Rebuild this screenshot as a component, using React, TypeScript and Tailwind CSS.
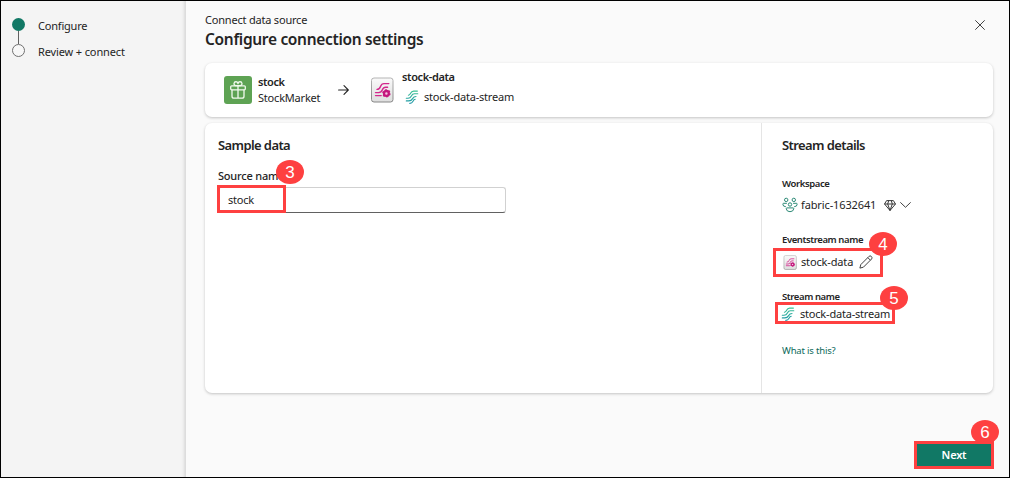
import React from "react";

function StreamIcon({ className }: { className: string }) {
  return (
    <svg className={className} viewBox="0 0 14 14" fill="none" strokeWidth="1.1" strokeLinecap="round">
      <defs>
        <linearGradient id="streamTone" gradientUnits="userSpaceOnUse" x1="0" y1="0" x2="0" y2="14">
          <stop offset="0" stopColor="#3cc492" />
          <stop offset="1" stopColor="#1b93a8" />
        </linearGradient>
      </defs>
      <g stroke="url(#streamTone)">
        <path d="M3.400 5.200C6.400 5 4.800 1.200 8.600 1.100H12.400" />
        <path d="M1.300 8.300H3C7.400 8.300 5.400 3.800 9.400 3.800H12.800" />
        <path d="M1.300 10.900H3.800C8.800 10.900 6.400 6.500 11 6.500" />
        <path d="M4.800 13.400C8.600 13.200 7.400 9.600 10.200 9.300" />
      </g>
    </svg>
  );
}

function EventstreamIcon({ className }: { className: string }) {
  return (
    <svg className={className} viewBox="0 0 24 26" fill="none">
      <defs>
        <linearGradient id="tileFace" x1="0" y1="0" x2="0" y2="1">
          <stop offset="0" stopColor="#fafafa" />
          <stop offset="1" stopColor="#dedede" />
        </linearGradient>
        <linearGradient id="tileEdge" x1="0" y1="0" x2="0" y2="1">
          <stop offset="0" stopColor="#b4b4b4" />
          <stop offset="1" stopColor="#858585" />
        </linearGradient>
      </defs>
      <rect x="1.500" y="1" width="21.500" height="24" rx="2.500" fill="url(#tileFace)" stroke="url(#tileEdge)" />
      <g stroke="#d3278c" strokeWidth="1.400" strokeLinecap="round">
        <path d="M7 12.400C12 12.400 9 6.600 14 6.600H18.800" />
        <path d="M5.500 15.600H8.600C13.800 15.600 11 10.200 15.600 10.200H17.600" />
        <path d="M5.500 18.600H11.200" />
      </g>
      <circle cx="16.400" cy="16.400" r="2.400" stroke="#c4177d" strokeWidth="2.300" fill="#f5c4e0" />
      <circle cx="16.400" cy="16.400" r="3.500" stroke="#c4177d" strokeWidth="1.400" strokeDasharray="1.830 1.830" />
    </svg>
  );
}

function GiftIcon() {
  return (
    <svg className="h-[18px] w-[16px]" viewBox="0 0 16 18" fill="none" stroke="#f2faee" strokeWidth="1.300" strokeLinejoin="round">
      <rect x=".7" y="4.800" width="14.600" height="4" rx="1" />
      <path d="M2 8.800V15.200C2 16.400 2.800 17.200 4 17.200H12C13.200 17.200 14 16.400 14 15.200V8.800M8 4.800V17.200" />
      <path d="M8 4.700H5.600A2 2 0 1 1 8 2.700A2 2 0 1 1 10.400 4.700Z" />
    </svg>
  );
}

function PeopleIcon() {
  return (
    <svg className="h-[16px] w-[16px] shrink-0" viewBox="0 0 16 16" fill="none" stroke="#2c8a76" strokeWidth="1">
      <circle cx="4.200" cy="2.900" r="1.700" />
      <circle cx="11.800" cy="2.900" r="1.700" />
      <circle cx="8" cy="7.500" r="1.700" />
      <path d="M4.900 6.300H1.600Q.8 6.300 .8 7.100Q.9 9.700 3.800 9.700M11.100 6.300H14.400Q15.200 6.300 15.200 7.100Q15.100 9.700 12.200 9.700" />
      <path d="M4.900 10.900H11.100Q11.900 10.900 11.800 11.800Q11.300 14.700 8 14.700Q4.700 14.700 4.200 11.800Q4.100 10.900 4.900 10.900Z" />
    </svg>
  );
}

function DiamondIcon() {
  return (
    <svg className="h-[11px] w-[12px] shrink-0" viewBox="0 0 12 11" fill="none" stroke="#303030" strokeWidth=".95" strokeLinejoin="round">
      <path d="M2.600 .6H9.400L11.500 4L6 10.500L.5 4ZM.5 4H11.500M4.700 .6L3.700 4L6 10.500L8.300 4L7.300 .6" />
    </svg>
  );
}

function Badge({ n, className }: { n: number; className: string }) {
  return (
    <span
      className={`absolute z-10 flex h-[24px] w-[28px] items-center justify-center rounded-[50%] bg-[#fe4040] font-['Liberation_Sans',sans-serif] text-[17px] leading-none tracking-normal text-white ${className}`}
    >
      {n}
    </span>
  );
}

function Frame({ className }: { className: string }) {
  return <span className={`pointer-events-none absolute border-[3px] border-[#fe4040] ${className}`} />;
}

export default function App() {
  return (
    <div className="flex h-[478px] w-[1010px] overflow-hidden border border-black bg-[#fafafa] font-['Noto_Sans',sans-serif] text-[11px] tracking-[-0.2px] text-[#242424]">
      <aside className="flex w-[185px] shrink-0 gap-[13px] bg-[#f4f4f4] pt-[17px] pl-[11px] shadow-[inset_-4px_0_3px_-2px_#d9d9d9]">
        <div className="flex w-[13px] flex-col items-center">
          <span className="h-[13px] w-[13px] shrink-0 rounded-full bg-[#117865]" />
          <span className="h-[13px] w-px shrink-0 bg-[#616161]" />
          <span className="h-[13px] w-[13px] shrink-0 rounded-full border border-[#707070] bg-[#f7f7f7]" />
        </div>
        <div className="flex flex-col whitespace-nowrap">
          <span className="h-[26px] leading-[15px]">Configure</span>
          <span className="leading-[15px] tracking-[-0.13px]">Review + connect</span>
        </div>
      </aside>

      <main className="flex min-w-0 flex-1 flex-col pr-[16px] pl-[19px]">
        <header className="flex h-[62px] shrink-0 justify-between pt-[10px]">
          <div>
            <div className="h-[17px] leading-[17px]">Connect data source</div>
            <h1 className="text-[15.5px] leading-[23px] font-semibold tracking-[-0.32px]">Configure connection settings</h1>
          </div>
          <svg className="mt-[9px] mr-[8px] h-[10px] w-[10px]" viewBox="0 0 10 10" stroke="#424242" strokeWidth="1">
            <path d="M.3 .3L9.700 9.700M9.700 .3L.3 9.700" />
          </svg>
        </header>

        <section className="flex h-[54px] shrink-0 items-center rounded-[7px] bg-white pl-[19px] whitespace-nowrap shadow-[0_1px_3px_rgba(0,0,0,0.22)]">
          <div className="flex h-[28px] w-[28px] items-center justify-center rounded-[3px] bg-[#5ea354]">
            <GiftIcon />
          </div>
          <div className="ml-[6px] w-[80px] leading-[16px]">
            <div className="font-semibold tracking-[-0.4px]">stock</div>
            <div>StockMarket</div>
          </div>
          <svg className="h-[10px] w-[11px]" viewBox="0 0 11 10" fill="none" stroke="#242424" strokeWidth="1.100" strokeLinecap="round" strokeLinejoin="round">
            <path d="M.6 5H10.200M6 .7L10.300 5L6 9.300" />
          </svg>
          <EventstreamIcon className="ml-[21px] h-[26px] w-[24px]" />
          <div className="ml-[8px] pb-[7px]">
            <div className="h-[20px] leading-[18px] font-semibold tracking-[-0.38px]">stock-data</div>
            <div className="flex h-[18px] items-center pl-[3px] leading-[18px]">
              <StreamIcon className="h-[14px] w-[14px]" />
              <span className="ml-[5px]">stock-data-stream</span>
            </div>
          </div>
        </section>

        <section className="mt-[6px] flex h-[270px] shrink-0 rounded-[7px] bg-white whitespace-nowrap shadow-[0_1px_3px_rgba(0,0,0,0.22)]">
          <div className="w-[556px] pt-[13px] pl-[13px]">
            <h2 className="text-[13px] leading-[18px] font-semibold tracking-[-0.6px]">Sample data</h2>
            <div className="relative mt-[14px] w-[288px]">
              <label className="block h-[19px] text-[11px] leading-[15px] font-medium">Source name</label>
              <div className="flex h-[26px] items-center rounded-[3px] border border-[#d1d1d1] border-b-[#616161] pl-[9px]">stock</div>
              <Frame className="top-[17px] left-[-1px] h-[28px] w-[69px]" />
              <Badge n={3} className="top-[-8px] left-[58px]" />
            </div>
          </div>
          <div className="flex-1 border-l border-[#e5e5e5] pt-[13px] pl-[20px]">
            <h2 className="text-[13px] leading-[18px] font-semibold tracking-[-0.6px]">Stream details</h2>
            <div className="mt-[23px] text-[9.5px] leading-[14px] font-semibold tracking-[-0.38px]">Workspace</div>
            <div className="mt-[5px] flex h-[18px] items-center">
              <PeopleIcon />
              <span className="ml-[3px] w-[83px] tracking-[-0.12px]">fabric-1632641</span>
              <DiamondIcon />
              <svg className="ml-[4px] h-[6px] w-[11px]" viewBox="0 0 11 6" fill="none" stroke="#424242" strokeWidth="1" strokeLinecap="round" strokeLinejoin="round">
                <path d="M.6 .6L5.500 5.300L10.400 .6" />
              </svg>
            </div>
            <div className="relative mt-[19px]">
              <div className="text-[9.5px] leading-[14px] font-semibold tracking-[-0.4px]">Eventstream name</div>
              <div className="mt-[6px] flex h-[18px] items-center">
                <EventstreamIcon className="ml-[1px] h-[15px] w-[14px]" />
                <span className="ml-[4px] w-[58px] tracking-[-0.15px]">stock-data</span>
                <svg className="h-[14px] w-[14px]" viewBox="0 0 14 14" fill="none" stroke="#424242" strokeWidth="1" strokeLinejoin="round">
                  <path d="M.9 13.100L1.800 9.600L10.100 1.300Q11.100 .4 12.200 1.300Q13.600 2.700 12.700 3.900L4.400 12.200ZM8.800 2.600L11.400 5.200" />
                </svg>
              </div>
              <Frame className="top-[15px] left-[-9px] h-[29px] w-[110px]" />
              <Badge n={4} className="top-[-1px] left-[87px]" />
            </div>
            <div className="relative mt-[19px]">
              <div className="text-[9.5px] leading-[14px] font-semibold tracking-[-0.4px]">Stream name</div>
              <div className="mt-[1px] flex h-[18px] items-center">
                <StreamIcon className="ml-[-1px] h-[14px] w-[14px]" />
                <span className="ml-[5px]">stock-data-stream</span>
              </div>
              <Frame className="top-[12px] left-[-7px] h-[22px] w-[120px]" />
              <Badge n={5} className="top-[-4px] left-[98px]" />
            </div>
            <a className="mt-[21px] block text-[9.5px] leading-[14px] tracking-[-0.18px] text-[#0c695a]">What is this?</a>
          </div>
        </section>

        <footer className="mt-[48px] flex justify-end">
          <div className="relative mr-[-1px] h-[28px] w-[80px]">
            <button className="h-full w-full border-[3px] border-[#fe4040] bg-[#117865] text-[11px] font-semibold text-white">Next</button>
            <Badge n={6} className="top-[-21px] left-[57px]" />
          </div>
        </footer>
      </main>
    </div>
  );
}
